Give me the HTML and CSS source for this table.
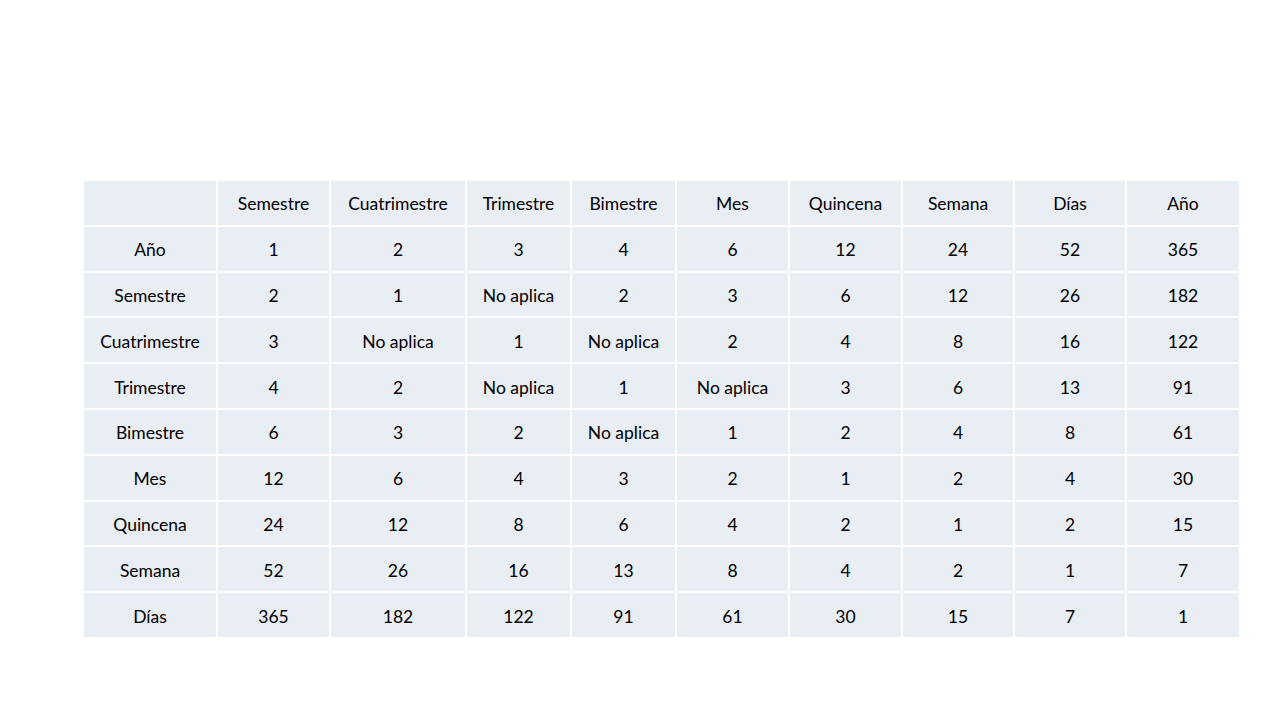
FILE: index.html
```html
<!DOCTYPE html>
<html lang="es">
<head>
<meta charset="utf-8">
<title>Tabla de periodos</title>
<link rel="stylesheet" href="styles.css">
</head>
<body>
<div class="slide">
<table class="grid">
<colgroup>
<col class="c0"><col class="c1"><col class="c2"><col class="c3"><col class="c4"><col class="c5"><col class="c6"><col class="c7"><col class="c8"><col class="c9">
</colgroup>
<tr><td></td><td>Semestre</td><td>Cuatrimestre</td><td>Trimestre</td><td>Bimestre</td><td>Mes</td><td>Quincena</td><td>Semana</td><td>Días</td><td>Año</td></tr>
<tr><td>Año</td><td>1</td><td>2</td><td>3</td><td>4</td><td>6</td><td>12</td><td>24</td><td>52</td><td>365</td></tr>
<tr><td>Semestre</td><td>2</td><td>1</td><td>No aplica</td><td>2</td><td>3</td><td>6</td><td>12</td><td>26</td><td>182</td></tr>
<tr><td>Cuatrimestre</td><td>3</td><td>No aplica</td><td>1</td><td>No aplica</td><td>2</td><td>4</td><td>8</td><td>16</td><td>122</td></tr>
<tr><td>Trimestre</td><td>4</td><td>2</td><td>No aplica</td><td>1</td><td>No aplica</td><td>3</td><td>6</td><td>13</td><td>91</td></tr>
<tr><td>Bimestre</td><td>6</td><td>3</td><td>2</td><td>No aplica</td><td>1</td><td>2</td><td>4</td><td>8</td><td>61</td></tr>
<tr><td>Mes</td><td>12</td><td>6</td><td>4</td><td>3</td><td>2</td><td>1</td><td>2</td><td>4</td><td>30</td></tr>
<tr><td>Quincena</td><td>24</td><td>12</td><td>8</td><td>6</td><td>4</td><td>2</td><td>1</td><td>2</td><td>15</td></tr>
<tr><td>Semana</td><td>52</td><td>26</td><td>16</td><td>13</td><td>8</td><td>4</td><td>2</td><td>1</td><td>7</td></tr>
<tr><td>Días</td><td>365</td><td>182</td><td>122</td><td>91</td><td>61</td><td>30</td><td>15</td><td>7</td><td>1</td></tr>
</table>
</div>
</body>
</html>
```
FILE: styles.css
```css
html, body {
  margin: 0;
  padding: 0;
  background: #ffffff;
}
.slide {
  width: 1280px;
  height: 720px;
  padding: 179px 0 0 82px;
  box-sizing: border-box;
}
.grid {
  border-collapse: collapse;
  table-layout: fixed;
  width: 1157px;
  font-family: Lato, "Open Sans", sans-serif;
  font-size: 17.5px;
  color: #000000;
}
.grid td {
  background: #e9edf4;
  border: 2px solid #ffffff;
  height: 41.8px;
  padding: 2px 0 0 0;
  text-align: center;
  vertical-align: middle;
}
.c0 { width: 134px; }
.c1 { width: 113px; }
.c2 { width: 136px; }
.c3 { width: 105px; }
.c4 { width: 105px; }
.c5 { width: 113px; }
.c6 { width: 113px; }
.c7 { width: 112px; }
.c8 { width: 112px; }
.c9 { width: 114px; }
```
